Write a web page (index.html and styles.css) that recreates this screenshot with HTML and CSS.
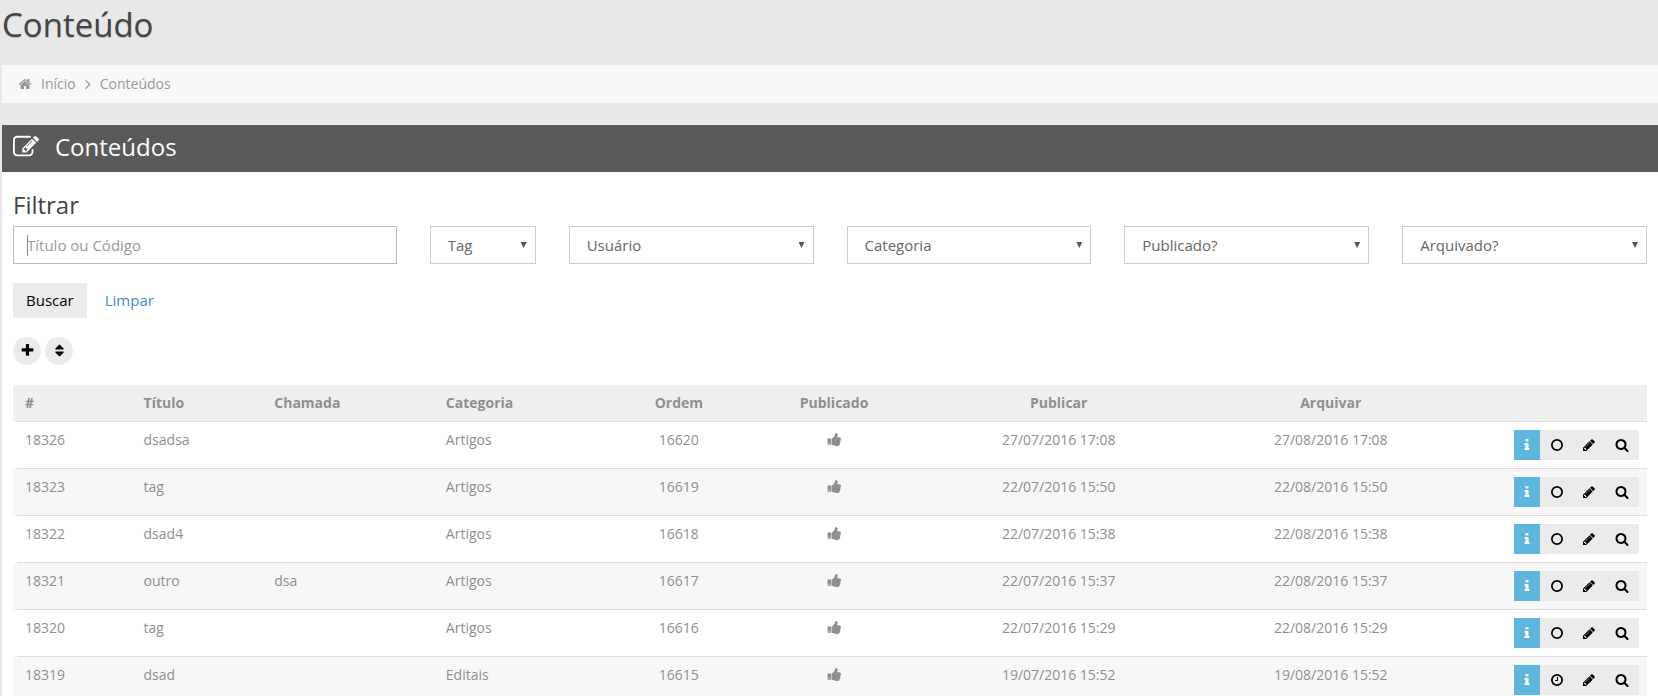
FILE: index.html
```html
<!DOCTYPE html>
<html lang="pt-BR">
<head>
<meta charset="utf-8">
<meta name="viewport" content="width=device-width, initial-scale=1">
<title>Conteúdo</title>
<link rel="stylesheet" href="styles.css">
</head>
<body>
<svg class="sprite" aria-hidden="true">
  <symbol id="home" viewBox="0 0 1792 1792"><path d="M1472 992v480q0 26-19 45t-45 19h-384v-384h-256v384h-384q-26 0-45-19t-19-45v-480q0-1 .5-3t.5-3l575-474 575 474q1 2 1 6zm223-69l-62 74q-8 9-21 11h-3q-13 0-21-7l-692-577-692 577q-12 8-24 7-13-2-21-11l-62-74q-8-10-7-23.5t11-21.5l719-599q32-26 76-26t76 26l244 204v-195q0-14 9-23t23-9h192q14 0 23 9t9 23v408l219 182q10 8 11 21.5t-7 23.5z"/></symbol>
  <symbol id="angle" viewBox="0 0 1792 1792"><path d="M1171 960q0 13-10 23l-466 466q-10 10-23 10t-23-10l-50-50q-10-10-10-23t10-23l393-393-393-393q-10-10-10-23t10-23l50-50q10-10 23-10t23 10l466 466q10 10 10 23z"/></symbol>
  <symbol id="edit" viewBox="0 0 1792 1792"><path d="M888 1184l116-116-152-152-116 116v56h96v96h56zm440-720q-16-16-33 1l-350 350q-17 17-1 33t33-1l350-350q17-17 1-33zm80 594v190q0 119-84.5 203.5t-203.5 84.5h-832q-119 0-203.5-84.5t-84.5-203.5v-832q0-119 84.5-203.5t203.5-84.5h832q63 0 117 25 15 7 18 23 3 17-9 29l-49 49q-14 14-32 8-23-6-45-6h-832q-66 0-113 47t-47 113v832q0 66 47 113t113 47h832q66 0 113-47t47-113v-126q0-13 9-22l64-64q15-15 35-7t20 29zm-96-738l288 288-672 672h-288v-288zm444 132l-92 92-288-288 92-92q28-28 68-28t68 28l152 152q28 28 28 68t-28 68z"/></symbol>
  <symbol id="plus" viewBox="0 0 1792 1792"><path d="M1600 736v192q0 40-28 68t-68 28h-416v416q0 40-28 68t-68 28h-192q-40 0-68-28t-28-68v-416h-416q-40 0-68-28t-28-68v-192q0-40 28-68t68-28h416v-416q0-40 28-68t68-28h192q40 0 68 28t28 68v416h416q40 0 68 28t28 68z"/></symbol>
  <symbol id="sort" viewBox="0 0 1792 1792"><path d="M1408 1088q0 26-19 45l-448 448q-19 19-45 19t-45-19l-448-448q-19-19-19-45t19-45 45-19h896q26 0 45 19t19 45zm0-384q0 26-19 45t-45 19h-896q-26 0-45-19t-19-45 19-45l448-448q19-19 45-19t45 19l448 448q19 19 19 45z"/></symbol>
  <symbol id="thumb" viewBox="0 0 1792 1792"><path d="M320 1344q0-26-19-45t-45-19q-27 0-45.5 19t-18.5 45q0 27 18.5 45.5t45.5 18.5q26 0 45-18.5t19-45.5zm160-512v640q0 26-19 45t-45 19h-288q-26 0-45-19t-19-45v-640q0-26 19-45t45-19h288q26 0 45 19t19 45zm1184 0q0 86-55 149 15 44 15 76 3 76-43 137 17 56 0 117-15 57-54 94 9 112-49 181-64 76-197 78h-129q-66 0-144-15.5t-121.5-29-120.5-39.5q-123-43-158-44-26-1-45-19.5t-19-44.5v-641q0-25 18-43.5t43-20.5q24-2 76-59t101-121q68-87 101-120 18-18 31-48t17.5-48.5 13.5-60.5q7-39 12.5-61t19.5-52 34-50q19-19 45-19 46 0 82.5 10.5t60 26 40 40.5 24 45 12 50 5 45 .5 39q0 38-9.5 76t-19 60-27.5 56q-3 6-10 18t-11 22-8 24h277q78 0 135 57t57 135z"/></symbol>
  <symbol id="info" viewBox="0 0 1792 1792"><path d="M1216 1344v128q0 26-19 45t-45 19h-512q-26 0-45-19t-19-45v-128q0-26 19-45t45-19h64v-384h-64q-26 0-45-19t-19-45v-128q0-26 19-45t45-19h384q26 0 45 19t19 45v576h64q26 0 45 19t19 45zm-128-1152v192q0 26-19 45t-45 19h-256q-26 0-45-19t-19-45v-192q0-26 19-45t45-19h256q26 0 45 19t19 45z"/></symbol>
  <symbol id="ring" viewBox="0 0 1792 1792"><circle cx="896" cy="896" r="656" fill="none" stroke="currentColor" stroke-width="224"/></symbol>
  <symbol id="clock" viewBox="0 0 1792 1792"><circle cx="896" cy="896" r="656" fill="none" stroke="currentColor" stroke-width="224"/><path d="M1024 544v448q0 14-9 23t-23 9h-320q-14 0-23-9t-9-23v-64q0-14 9-23t23-9h224v-352q0-14 9-23t23-9h64q14 0 23 9t9 23z"/></symbol>
  <symbol id="pencil" viewBox="0 0 1792 1792"><path d="M491 1536l91-91-235-235-91 91v107h128v128h107zm523-928q0-22-22-22-10 0-17 7l-542 542q-7 7-7 17 0 22 22 22 10 0 17-7l542-542q7-7 7-17zm-54-192l416 416-832 832h-416v-416zm683 96q0 53-37 90l-166 166-416-416 166-165q36-38 90-38 53 0 91 38l235 234q37 39 37 91z"/></symbol>
  <symbol id="search" viewBox="0 0 1792 1792"><path d="M1216 832q0-185-131.5-316.5t-316.5-131.5-316.5 131.5-131.5 316.5 131.5 316.5 316.5 131.5 316.5-131.5 131.5-316.5zm512 832q0 52-38 90t-90 38q-54 0-90-38l-343-342q-179 124-399 124-143 0-273.5-55.5t-225-150-150-225-55.5-273.5 55.5-273.5 150-225 225-150 273.5-55.5 273.5 55.5 225 150 150 225 55.5 273.5q0 220-124 399l343 343q37 37 37 90z"/></symbol>
</svg>

<main class="page">
  <h1 class="page-title">Conteúdo</h1>

  <nav class="breadcrumb" aria-label="Navegação">
    <svg class="icon"><use href="#home"/></svg>
    <a href="#inicio">Início</a>
    <svg class="icon icon-angle"><use href="#angle"/></svg>
    <a href="#conteudos">Conteúdos</a>
  </nav>

  <section class="panel">
    <header class="panel-header">
      <svg class="icon icon-large"><use href="#edit"/></svg>
      <h2 class="panel-title">Conteúdos</h2>
    </header>
    <div class="panel-body">
      <h3 class="filter-title">Filtrar</h3>
      <form>
        <div class="filters">
          <input class="field search-field" type="text" placeholder="Título ou Código" aria-label="Título ou Código">
          <label class="select-wrap narrow"><select class="field" aria-label="Tag"><option>Tag</option></select></label>
          <label class="select-wrap"><select class="field" aria-label="Usuário"><option>Usuário</option></select></label>
          <label class="select-wrap"><select class="field" aria-label="Categoria"><option>Categoria</option></select></label>
          <label class="select-wrap"><select class="field" aria-label="Publicado"><option>Publicado?</option></select></label>
          <label class="select-wrap"><select class="field" aria-label="Arquivado"><option>Arquivado?</option></select></label>
        </div>
        <div class="form-actions">
          <button class="btn" type="submit">Buscar</button>
          <a class="link" href="#limpar">Limpar</a>
        </div>
      </form>
      <div class="tools">
        <button class="round" type="button" aria-label="Adicionar"><svg class="icon icon-tool"><use href="#plus"/></svg></button>
        <button class="round" type="button" aria-label="Ordenar"><svg class="icon icon-tool"><use href="#sort"/></svg></button>
      </div>
      <table class="list">
        <colgroup>
          <col class="c-id"><col class="c-title"><col class="c-call"><col class="c-cat"><col class="c-order"><col class="c-pub"><col class="c-from"><col class="c-to"><col class="c-act">
        </colgroup>
        <thead>
          <tr><th>#</th><th>Título</th><th>Chamada</th><th>Categoria</th><th class="mid">Ordem</th><th class="mid">Publicado</th><th class="mid">Publicar</th><th class="mid">Arquivar</th><th></th></tr>
        </thead>
        <tbody>
          <tr><td>18326</td><td>dsadsa</td><td></td><td>Artigos</td><td class="mid">16620</td><td class="mid"><svg class="icon icon-thumb"><use href="#thumb"/></svg></td><td class="mid">27/07/2016 17:08</td><td class="mid">27/08/2016 17:08</td>
            <td><div class="actions"><button class="act info" aria-label="Informações"><svg class="icon"><use href="#info"/></svg></button><button class="act" aria-label="Estado"><svg class="icon"><use href="#ring"/></svg></button><button class="act tool" aria-label="Editar"><svg class="icon"><use href="#pencil"/></svg></button><button class="act tool" aria-label="Ver"><svg class="icon"><use href="#search"/></svg></button></div></td></tr>
          <tr><td>18323</td><td>tag</td><td></td><td>Artigos</td><td class="mid">16619</td><td class="mid"><svg class="icon icon-thumb"><use href="#thumb"/></svg></td><td class="mid">22/07/2016 15:50</td><td class="mid">22/08/2016 15:50</td>
            <td><div class="actions"><button class="act info" aria-label="Informações"><svg class="icon"><use href="#info"/></svg></button><button class="act" aria-label="Estado"><svg class="icon"><use href="#ring"/></svg></button><button class="act tool" aria-label="Editar"><svg class="icon"><use href="#pencil"/></svg></button><button class="act tool" aria-label="Ver"><svg class="icon"><use href="#search"/></svg></button></div></td></tr>
          <tr><td>18322</td><td>dsad4</td><td></td><td>Artigos</td><td class="mid">16618</td><td class="mid"><svg class="icon icon-thumb"><use href="#thumb"/></svg></td><td class="mid">22/07/2016 15:38</td><td class="mid">22/08/2016 15:38</td>
            <td><div class="actions"><button class="act info" aria-label="Informações"><svg class="icon"><use href="#info"/></svg></button><button class="act" aria-label="Estado"><svg class="icon"><use href="#ring"/></svg></button><button class="act tool" aria-label="Editar"><svg class="icon"><use href="#pencil"/></svg></button><button class="act tool" aria-label="Ver"><svg class="icon"><use href="#search"/></svg></button></div></td></tr>
          <tr><td>18321</td><td>outro</td><td>dsa</td><td>Artigos</td><td class="mid">16617</td><td class="mid"><svg class="icon icon-thumb"><use href="#thumb"/></svg></td><td class="mid">22/07/2016 15:37</td><td class="mid">22/08/2016 15:37</td>
            <td><div class="actions"><button class="act info" aria-label="Informações"><svg class="icon"><use href="#info"/></svg></button><button class="act" aria-label="Estado"><svg class="icon"><use href="#ring"/></svg></button><button class="act tool" aria-label="Editar"><svg class="icon"><use href="#pencil"/></svg></button><button class="act tool" aria-label="Ver"><svg class="icon"><use href="#search"/></svg></button></div></td></tr>
          <tr><td>18320</td><td>tag</td><td></td><td>Artigos</td><td class="mid">16616</td><td class="mid"><svg class="icon icon-thumb"><use href="#thumb"/></svg></td><td class="mid">22/07/2016 15:29</td><td class="mid">22/08/2016 15:29</td>
            <td><div class="actions"><button class="act info" aria-label="Informações"><svg class="icon"><use href="#info"/></svg></button><button class="act" aria-label="Estado"><svg class="icon"><use href="#ring"/></svg></button><button class="act tool" aria-label="Editar"><svg class="icon"><use href="#pencil"/></svg></button><button class="act tool" aria-label="Ver"><svg class="icon"><use href="#search"/></svg></button></div></td></tr>
          <tr><td>18319</td><td>dsad</td><td></td><td>Editais</td><td class="mid">16615</td><td class="mid"><svg class="icon icon-thumb"><use href="#thumb"/></svg></td><td class="mid">19/07/2016 15:52</td><td class="mid">19/08/2016 15:52</td>
            <td><div class="actions"><button class="act info" aria-label="Informações"><svg class="icon"><use href="#info"/></svg></button><button class="act" aria-label="Estado"><svg class="icon"><use href="#clock"/></svg></button><button class="act tool" aria-label="Editar"><svg class="icon"><use href="#pencil"/></svg></button><button class="act tool" aria-label="Ver"><svg class="icon"><use href="#search"/></svg></button></div></td></tr>
        </tbody>
      </table>
    </div>
  </section>
</main>
</body>
</html>
```
FILE: styles.css
```css
* { box-sizing: border-box; }

html { scrollbar-width: none; }

body {
  margin: 0;
  background: #e8e8e8;
  color: #8f8f8f;
  font: 14px/20px "Open Sans", "Noto Sans", sans-serif;
}

button, input, select { font-family: inherit; border-radius: 0; margin: 0; }

h1, h2, h3 { margin: 0; font-weight: 400; }

.sprite { display: none; }

.icon { width: 14px; height: 14px; fill: currentColor; flex: none; display: block; }
.icon-angle { width: 16px; height: 16px; }
.icon-large { width: 26px; height: 26px; }
.icon-tool { width: 15px; height: 15px; }
.icon-thumb { width: 15px; height: 15px; margin: 2px auto 0; }

.page { padding-left: 2px; }

.page-title {
  padding: 5px 0 20px;
  color: #444;
  font-size: 33px;
  line-height: 40px;
  text-shadow: 0 1px 1px rgba(0, 0, 0, 0.2);
}

.breadcrumb {
  display: flex;
  align-items: center;
  gap: 4px;
  height: 38px;
  padding: 0 16px;
  background: #f8f8f8;
  color: #999;
}

.breadcrumb a { color: #999; text-decoration: none; }
.breadcrumb a:first-of-type { padding-left: 5px; }

.panel { margin-top: 22px; background: #fff; }

.panel-header {
  display: flex;
  align-items: center;
  gap: 16px;
  height: 47px;
  padding: 0 11px 4px;
  background: #5a5a5a;
  color: #fff;
}

.panel-title { font-size: 24px; line-height: 32px; }

.panel-body { padding: 16px 11px 24px; }

.filter-title { padding-bottom: 4px; color: #444; font-size: 24px; line-height: 34px; }

.filters {
  display: grid;
  grid-template-columns: repeat(12, 1fr);
  column-gap: 33px;
}

.field {
  width: 100%;
  height: 38px;
  border: 1px solid #ccc;
  background: #fff;
  color: #666;
  font-size: 15px;
  outline: none;
}

.search-field {
  grid-column: span 3;
  padding: 0 13px;
  border-color: #bbb;
  background: #fff linear-gradient(#888, #888) 13px 8px / 1px 21px no-repeat;
}

.search-field::placeholder { color: #999; opacity: 1; }

.select-wrap { position: relative; grid-column: span 2; }
.select-wrap.narrow { grid-column: span 1; }
.select-wrap .field { display: block; appearance: none; padding: 0 17px; }

.select-wrap::after {
  content: "";
  position: absolute;
  top: 16px;
  right: 9px;
  width: 6px;
  height: 6px;
  background: #555;
  clip-path: polygon(0 0, 100% 0, 50% 100%);
  pointer-events: none;
}

.form-actions { display: flex; align-items: center; gap: 18px; margin-top: 19px; }

.btn {
  height: 35px;
  padding: 0 13px 2px;
  border: 0;
  background: #ebebeb;
  color: #000;
  font-size: 15px;
}

.link { padding-bottom: 2px; color: #428bca; font-size: 15px; text-decoration: none; }

.tools { display: flex; gap: 4px; margin: 19px 0 20px; }

.round {
  display: grid;
  place-items: center;
  width: 28px;
  height: 28px;
  padding: 0 0 1px;
  border: 0;
  border-radius: 50%;
  background: #ebebeb;
  color: #000;
}

.list { width: 100%; table-layout: fixed; border-collapse: collapse; }

.c-id { width: 7.5%; }
.c-title { width: 8%; }
.c-call { width: 10.5%; }
.c-cat { width: 10%; }
.c-order, .c-pub { width: 9.5%; }
.c-from { width: 18%; }
.c-to { width: 15.3%; }

/* the rule under each row starts 4px in from the row's left edge */
.list tr { background: linear-gradient(#ddd, #ddd) 4px 100% / 100% 1px no-repeat; }
.list thead tr { background-color: #efefef; }
.list tbody tr:nth-child(even) { background-color: #f7f7f7; }

.list th, .list td { padding: 8px 8px 9px; text-align: left; vertical-align: top; }
.list th { font-weight: 700; }
.list th:first-child, .list td:first-child { padding-left: 12px; }
.list .mid { text-align: center; }

.actions { display: flex; justify-content: flex-end; }

.act {
  display: grid;
  place-items: center;
  width: 33px;
  height: 30px;
  padding: 0;
  border: 0;
  background: #ebebeb;
  color: #000;
}

.act.info { width: 26px; background: #5fb6dc; color: #fff; }
.act.tool { padding-right: 2px; }
```
